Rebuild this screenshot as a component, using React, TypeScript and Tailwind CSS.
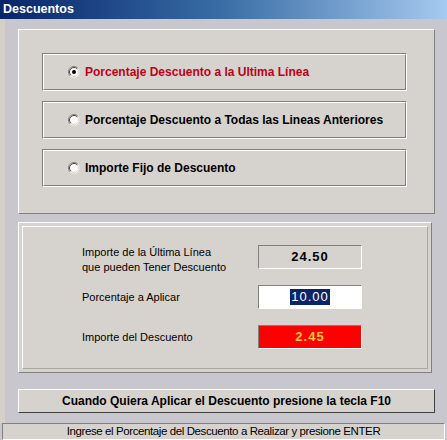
function Radio({ checked }: { checked?: boolean }) {
  return (
    <svg width="12" height="12" viewBox="0 0 12 12" className="shrink-0">
      <circle cx="6" cy="6" r="5.5" fill="#ffffff" />
      <path d="M9.9 2.1 A5.5 5.5 0 0 0 2.1 9.9" stroke="#808080" fill="none" />
      <path d="M9.2 2.8 A4.5 4.5 0 0 0 2.8 9.2" stroke="#404040" fill="none" />
      <path d="M9.2 2.8 A4.5 4.5 0 0 1 2.8 9.2" stroke="#d4d0c8" fill="none" />
      {checked && <circle cx="6" cy="6" r="2" fill="#000000" />}
    </svg>
  );
}

function Option({ label, checked, red }: { label: string; checked?: boolean; red?: boolean }) {
  return (
    <div className="w-[365px] h-[38px] border border-t-[#808080] border-l-[#808080] border-b-white border-r-white">
      <div className="h-full border border-t-white border-l-white border-b-[#808080] border-r-[#808080] flex items-center gap-[5px] pl-[24px]">
        <Radio checked={checked} />
        <span className={`text-[12px] font-bold ${red ? "text-[#c0001a]" : "text-black"}`}>{label}</span>
      </div>
    </div>
  );
}

function ValueBox({ children, bg }: { children: React.ReactNode; bg: string }) {
  return (
    <div className={`w-[104px] h-[24px] border border-t-[#808080] border-l-[#808080] border-b-white border-r-white ${bg} flex items-center justify-center`}>
      {children}
    </div>
  );
}

export default function App() {
  return (
    <div className="w-[447px] h-[440px] bg-[#c8c7ce] flex flex-col overflow-hidden font-['Liberation_Sans',Arial,sans-serif] text-black">
      <div className="h-[19px] bg-gradient-to-r from-[#0a246a] via-[#3a6ea5] to-[#a6caf0] flex items-center pl-[3px]">
        <span className="text-white font-bold text-[12.5px]">Descuentos</span>
      </div>

      <div className="flex-1 flex flex-col border-l-[5px] border-[#d4d0c8] pl-[13px] pt-[10px]">
        <div className="w-[417px] h-[185px] bg-[#d6d3ce] border border-t-white border-l-white border-b-[#808080] border-r-[#808080] pt-[23px] pl-[23px] flex flex-col gap-[10px]">
          <Option label="Porcentaje Descuento a la Ultima Línea" checked red />
          <Option label="Porcentaje Descuento a Todas las Lineas Anteriores" />
          <Option label="Importe Fijo de Descuento" />
        </div>

        <div className="mt-[8px] w-[414px] h-[151px] bg-[#d6d3ce] border border-t-white border-l-white border-b-[#808080] border-r-[#808080] p-[3px]">
          <div className="h-full border border-t-white border-l-white border-b-[#a9a7a2] border-r-[#a9a7a2] pt-[18px] pl-[59px] flex flex-col gap-[16px] text-[11px]">
            <div className="h-[24px] flex items-center">
              <div className="w-[176px] leading-[15px] pt-[6px]">
                Importe de la Última Línea
                <br />
                que pueden Tener Descuento
              </div>
              <ValueBox bg="bg-[#d6d3ce]">
                <span className="text-[13px] font-bold tracking-[1px]">24.50</span>
              </ValueBox>
            </div>
            <div className="h-[24px] flex items-center">
              <div className="w-[176px]">Porcentaje a Aplicar</div>
              <ValueBox bg="bg-white">
                <span className="text-[13px] tracking-[1px] bg-[#0a246a] text-white px-[1px] leading-[16px]">10.00</span>
              </ValueBox>
            </div>
            <div className="h-[24px] flex items-center">
              <div className="w-[176px]">Importe del Descuento</div>
              <ValueBox bg="bg-[#ff0000]">
                <span className="text-[13px] tracking-[1px] text-[#ffc832] font-bold">2.45</span>
              </ValueBox>
            </div>
          </div>
        </div>

        <div className="mt-[16px] w-[417px] h-[24px] bg-[#d6d3ce] border border-t-white border-l-white border-b-[#404040] border-r-[#404040] flex items-center justify-center">
          <span className="text-[12px] font-bold">Cuando Quiera Aplicar el Descuento presione la tecla F10</span>
        </div>
      </div>

      <div className="mx-[2px] h-[17px] bg-[#d6d3ce] border border-t-[#808080] border-l-[#808080] border-b-white border-r-white flex items-center justify-center">
        <span className="text-[11.5px] tracking-[-0.4px]">Ingrese el Porcentaje del Descuento a Realizar y presione ENTER</span>
      </div>
    </div>
  );
}
